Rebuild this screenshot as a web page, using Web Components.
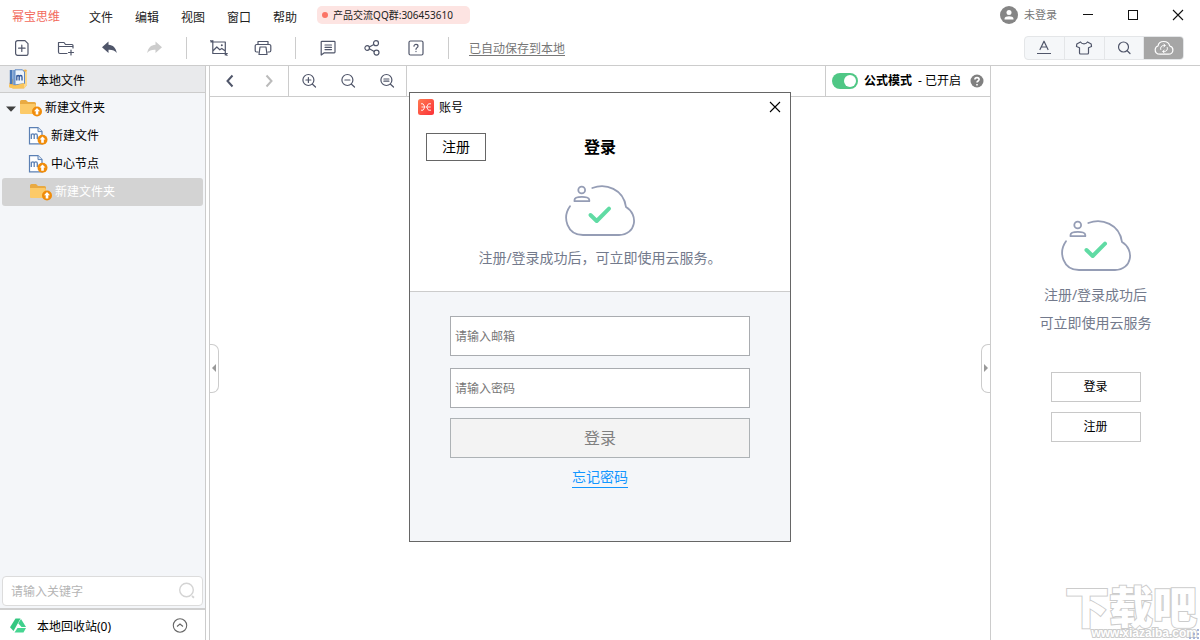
<!DOCTYPE html>
<html lang="zh-CN">
<head>
<meta charset="utf-8">
<title>幂宝思维</title>
<style>
  html, body { height: 100%; }
  body {
    margin: 0;
    background: #fff;
    color: #000;
    font: 12px/20px "Noto Sans", "Noto Sans CJK SC", sans-serif;
    overflow: hidden;
  }
</style>
</head>
<body>
<mind-app></mind-app>
<script>
const BASE = `
  *, *::before, *::after { box-sizing: border-box; }
  button { font: inherit; color: inherit; background: none; border: 0; padding: 0; margin: 0; cursor: pointer; }
  button, .row { display: flex; align-items: center; }
  button { justify-content: center; }
  input { font: inherit; color: inherit; margin: 0; min-width: 0; }
  a { color: inherit; }
`;

function define(name, css, html, setup) {
  const template = document.createElement('template');
  template.innerHTML = `<style>${BASE}${css}</style>${html}`;
  customElements.define(name, class extends HTMLElement {
    constructor() {
      super();
      this.attachShadow({ mode: 'open' }).append(template.content.cloneNode(true));
    }
    connectedCallback() { if (setup) setup.call(this, this.shadowRoot); }
  });
}

const line = 'fill="none" stroke="currentColor" stroke-width="1.2" stroke-linecap="round" stroke-linejoin="round"';
const badge = (x, y) => `<circle cx="${x}" cy="${y}" r="5" fill="#f08c0a"/><path d="M${x} ${y - 3.4}l3 3.200h-1.700v3.200h-2.600v-3.200h-1.700z" fill="#fff"/>`;
const magnifier = inner => [16, 16, `<g ${line}><circle cx="7.4" cy="7" r="5.5"/><path d="M11.5 11.2l3 2.8${inner}"/></g>`];

/* name: [width, height, markup] */
const ICONS = {
  'file-add': [16, 16, `<g ${line}><path d="M4 .7h7l3 3v10a1.6 1.6 0 0 1-1.6 1.6H3.6A2 2 0 0 1 1.6 13.300V2.700A2 2 0 0 1 3.600.7zM7.800 5v6.500M4.600 8.200h6.500"/></g>`],
  'folder-add': [18, 16, `<g ${line}><path d="M10 13.500H3A1.500 1.500 0 0 1 1.500 12V2.500H7l1.500 2H15A1 1 0 0 1 16 5.500V8M1.500 6.500H16M14 10v5M11.500 12.500h5"/></g>`],
  undo: [18, 16, `<path d="M7.500 1.500v3.300c4.500.2 7.400 3.100 8.300 8.200-2-2.600-4.600-3.500-8.300-3.300v3.300L1 7.200z" fill="currentColor"/>`],
  redo: [18, 16, `<path d="M10.500 1.500v3.300C6 5 3.100 7.900 2.200 13c2-2.600 4.600-3.500 8.300-3.300v3.300L17 7.200z" fill="currentColor"/>`],
  picture: [18, 16, `<g ${line}><path d="M.8 1.800h2M2.800.5v13h12.500M3 2h12.300v13M2.800 11l4-4 3 2.800 2-1.400 3.500 2.600M15.300 13.500h2M.8.500l1 1M16 14.500l1 .8"/></g><circle cx="11.800" cy="5.300" r="1" fill="currentColor"/>`],
  printer: [18, 16, `<g ${line}><path d="M4 4V1.500h10V4M4 12H2.700A1.500 1.500 0 0 1 1.200 10.500v-4.500A1.500 1.500 0 0 1 2.700 4.500h12.600a1.500 1.500 0 0 1 1.500 1.500v4.500a1.500 1.500 0 0 1-1.500 1.500H14M6 7h6l1 7.500H5z"/></g>`],
  note: [16, 16, `<g ${line}><path d="M2 1.300h12.200a.8.8 0 0 1 .8.8v10a.8.8 0 0 1-.8.800H4L1.200 15V2.100A.8.8 0 0 1 2 1.300zM5 5h6.500M5 7.300h6.500M5 9.600h6.500"/></g>`],
  share: [16, 16, `<g ${line}><circle cx="3.200" cy="8" r="2.300"/><circle cx="12" cy="3.200" r="2.500"/><circle cx="12.500" cy="12.600" r="2.500"/><path d="M5.300 7l4.500-2.500M5.400 8.800l4.800 2.700"/></g>`],
  help: [16, 16, `<g ${line}><rect x="1" y="1" width="14" height="14" rx="1.500"/><path d="M6 6.200C6 3.800 10 3.900 10 6.200 10 7.600 8 7.700 8 9.300M8 11.400v.2"/></g>`],
  'text-style': [16, 16, `<g ${line}><path d="M4 9.500L8 1.200l4 8.300M5.300 7h5.400"/><path d="M1 13.500h14" stroke-linecap="butt"/></g>`],
  shirt: [18, 16, `<g ${line}><path d="M5.500 2C7 4.500 11 4.500 12.500 2l3.700 2 .3 2.500-3 1.200v5.300a1 1 0 0 1-1 1h-7a1 1 0 0 1-1-1V7.700l-3-1.200L1.800 4z"/></g>`],
  search: [16, 16, `<g ${line}><circle cx="7.500" cy="7" r="5"/><path d="M11.200 10.800l2.800 2.700"/></g>`],
  'cloud-sync': [20, 16, `<g ${line}><path d="M6 14.200C2.500 14.200 1 12 1.200 9.500c.1-1.800 1.200-3 2.800-3.500C4.400 3.200 7 1.500 9.700 1.500c2.900 0 5.400 1.600 6 4.500 2 .5 3.200 2 3.200 3.900 0 2.600-1.800 4.300-4.400 4.300z"/><path d="M6.700 9.500C6 7.300 7.500 5.500 9.700 5.500h1.200M9.800 4l1.400 1.500L9.800 7M13.300 7.500c.7 2.200-.8 4-3 4H9.100M10.200 10l-1.400 1.500L10.200 13" stroke-width="1"/></g>`],
  left: [10, 14, `<path d="M7.500 1.500L2.500 7l5 5.500" fill="none" stroke="currentColor" stroke-width="2"/>`],
  right: [10, 14, `<path d="M2.500 1.500L7.500 7l-5 5.500" fill="none" stroke="currentColor" stroke-width="2"/>`],
  'zoom-in': magnifier('M4.900 7h5M7.400 4.500v5'),
  'zoom-out': magnifier('M4.900 7h5'),
  'zoom-fit': magnifier('M4.900 6h5M4.900 8.200h5'),
  minimize: [12, 12, `<path d="M1 5.500h10" stroke="currentColor"/>`],
  maximize: [12, 12, `<rect x="1.500" y="1.500" width="9" height="9" fill="none" stroke="currentColor"/>`],
  close: [12, 12, `<path d="M1 1l10 10M11 1L1 11" stroke="currentColor" stroke-width="1.100"/>`],
  avatar: [18, 18, `<circle cx="9" cy="9" r="9" fill="#858585"/><circle cx="9" cy="6.500" r="2.500" fill="#fff"/><path d="M4.500 13.500v-.8C4.500 10.900 7 10.200 9 10.200s4.500.7 4.500 2.500v.8z" fill="#fff"/>`],
  question: [14, 14, `<circle cx="7" cy="7" r="6.500" fill="#808080"/><path d="M4.900 5.600C4.900 2.900 9.100 3 9.100 5.500 9.100 7 7 7 7 8.600M7 10v1.400" fill="none" stroke="#fff" stroke-width="1.600"/>`],
  library: [20, 20, `<path d="M11 1.500l7-1 1 1V16l-3 3.500H5L1.500 18V14z" fill="#f0b24a"/><path d="M16 4l3-2.500V16l-3 3.500z" fill="#fbd78c"/><path d="M1.800 1h2.700v14H1.800z" fill="#4a78b8"/><path d="M4.800 1h2.200v15H4.800z" fill="#7fa3d4"/><path d="M7 .8h7.500L16.500 3v11.500L7 16z" fill="#eef4fb" stroke="#5f89c3"/><path d="M8.800 11.500V6.300M8.800 8C9.200 6 11.200 6 11.200 8v3.500M11.200 8c.4-2 2.800-2 2.800 0v3.500" fill="none" stroke="#31579b" stroke-width="1.300"/><path d="M1 15.500l5.500 1.200L16 14v5l-10.500.6L1 18.200z" fill="#f9c55c"/>`],
  folder: [22, 18, `<path d="M0 2.500A1.500 1.500 0 0 1 1.500 1H6l2 2h6.500A1.500 1.500 0 0 1 16 4.500v10H1.500A1.500 1.500 0 0 1 0 13z" fill="#e9aa42"/><path d="M0 5h14.500A1.500 1.500 0 0 1 16 6.500V15H1.500A1.500 1.500 0 0 1 0 13.500z" fill="#fcca68"/>${badge(17, 12.5)}`],
  document: [20, 18, `<path d="M1.500.6h8.500l4 4v12.200H1.500z" fill="#fff" stroke="#5b80b4" stroke-width="1.200"/><path d="M10 .6v4h4" fill="#dbe6f4" stroke="#5b80b4"/><path d="M3.300 12V6.800M3.300 8.500c.3-2.200 2.900-2.100 2.900 0V12M6.200 8.500c.3-2.200 3.100-2.100 3.100 0V12" fill="none" stroke="#5b80b4" stroke-width="1.300"/>${badge(14.5, 12.8)}`],
  caret: [10, 8, `<path d="M0 2.500h10L5 7.800z" fill="#404040"/>`],
  'find': [18, 18, `<circle cx="8.500" cy="8" r="6.800" fill="none" stroke="#d4d4d4" stroke-width="1.400"/><path d="M14 14l2 1.700" stroke="#d4d4d4" stroke-width="1.800"/>`],
  recycle: [17, 16, `<path d="M5.500 .5h5l-2.500 4.500-4.500 8L0 9.300z" fill="#35c781"/><path d="M11 1l5 8h-4.500L8.200 5.200z" fill="#3fd08c"/><path d="M7.500 10H16L13.500 14.500H4.500z" fill="#46d591"/>`],
  expand: [16, 16, `<g fill="none" stroke="#666" stroke-width="1.100"><circle cx="8" cy="7.500" r="6.700"/><path d="M5 8.500l3-2.500L11 8.500"/></g>`],
  'triangle-left': [6, 10, `<path d="M5 0v8L1 4z" fill="#999"/>`],
  'triangle-right': [6, 10, `<path d="M1 0v8l4-4z" fill="#999"/>`],
  brand: [16, 16, `<defs><linearGradient id="g" x1="0" y1="0" x2="1" y2="1"><stop stop-color="#ff7a50"/><stop offset="1" stop-color="#fb3038"/></linearGradient></defs><rect width="16" height="16" rx="2.500" fill="url(#g)"/><path d="M3 4.800h2L7 8l-2 3.200H3M3.500 8H7M13 4.800h-2.500L8.500 8l2 3.200H13M8.500 8h4.200" fill="none" stroke="#fff" stroke-width=".9"/>`],
  cloud: [70, 52, `<g fill="none" stroke="#959db5" stroke-width="1.800" stroke-linecap="round"><path d="M27.300 3C41-2 58.500 4 61 22 74 29.500 71 50 54 50H18C2 50-3 32.500 5 21.200"/><circle cx="16.700" cy="5" r="3.400"/><path d="M9.500 15C9.500 10.800 24.300 10.800 24.300 15V16.200H9.500z" stroke-linejoin="round"/></g><path d="M25.500 30l6.200 6L44 23.700" fill="none" stroke="#60dba4" stroke-width="4" stroke-linecap="round" stroke-linejoin="round"/>`],
  grip: [12, 12, `<path d="M9 1h2v2H9zM5 5h2v2H5zM9 5h2v2H9zM1 9h2v2H1zM5 9h2v2H5zM9 9h2v2H9z" fill="#a8b4d8"/>`],
};

define('ui-icon', `:host { display: inline-flex; flex: none; } svg { display: block; }`, `<span class="row"></span>`, function (root) {
  const [w, h, markup] = ICONS[this.getAttribute('name')];
  root.querySelector('span').innerHTML = `<svg width="${w}" height="${h}" viewBox="0 0 ${w} ${h}" aria-hidden="true">${markup}</svg>`;
});

define('menu-bar', `
  :host { display: flex; align-items: center; height: 32px; padding-left: 12px; color: #222; }
  .brand { color: #f2695c; padding-top: 2px; }
  nav { display: flex; gap: 22px; margin: 4px 20px 0 29px; }
  .group { height: 18px; width: 153px; padding-left: 5px; gap: 5px; border-radius: 5px; background: #fde4e2; font-size: 10px; line-height: 18px; margin-bottom: 2px; }
  .group::before { content: ""; width: 6px; height: 6px; border-radius: 50%; background: #fb7466; }
  .end { margin-left: auto; height: 30px; align-self: flex-start; }
  .user { gap: 6px; font-size: 11px; color: #777; margin-right: 8px; }
  .win { width: 45px; height: 30px; color: #111; }
`, `
  <span class="brand">幂宝思维</span>
  <nav><button>文件</button><button>编辑</button><button>视图</button><button>窗口</button><button>帮助</button></nav>
  <div class="row group">产品交流QQ群:306453610</div>
  <div class="row end">
    <button class="user"><ui-icon name="avatar"></ui-icon>未登录</button>
    <button class="win" aria-label="最小化"><ui-icon name="minimize"></ui-icon></button>
    <button class="win" aria-label="最大化"><ui-icon name="maximize"></ui-icon></button>
    <button class="win" aria-label="关闭"><ui-icon name="close"></ui-icon></button>
  </div>
`);

define('tool-bar', `
  :host { display: flex; align-items: center; height: 34px; padding: 0 16px 2px 0; box-sizing: border-box; border-bottom: 1px solid #ccc; color: #50566a; }
  button { width: 44px; height: 30px; }
  button:disabled { color: #ccc; }
  hr { width: 1px; height: 22px; margin: 0 10px; border: 0; background: #ccc; }
  a { color: #777; margin-left: 10px; padding-top: 2px; text-underline-offset: 2px; }
  .tabs { margin-left: auto; border: 1px solid #e4e6e8; border-radius: 4px; background: #f5f7f9; overflow: hidden; width: 160px; height: 24px; }
  .tabs button { flex: 1; height: 24px; border-left: 1px solid #e4e6e8; }
  .tabs button:first-child { border-left: 0; }
  .tabs .on { background: #a6a6a6; color: #fff; }
`, `
  <button aria-label="新建文件"><ui-icon name="file-add"></ui-icon></button>
  <button aria-label="新建文件夹"><ui-icon name="folder-add"></ui-icon></button>
  <button aria-label="撤销"><ui-icon name="undo"></ui-icon></button>
  <button aria-label="重做" disabled><ui-icon name="redo"></ui-icon></button>
  <hr>
  <button aria-label="导出图片"><ui-icon name="picture"></ui-icon></button>
  <button aria-label="打印"><ui-icon name="printer"></ui-icon></button>
  <hr>
  <button aria-label="备注"><ui-icon name="note"></ui-icon></button>
  <button aria-label="分享"><ui-icon name="share"></ui-icon></button>
  <button aria-label="帮助"><ui-icon name="help"></ui-icon></button>
  <hr>
  <a href="#saved">已自动保存到本地</a>
  <div class="row tabs">
    <button aria-label="文字"><ui-icon name="text-style"></ui-icon></button>
    <button aria-label="主题"><ui-icon name="shirt"></ui-icon></button>
    <button aria-label="搜索"><ui-icon name="search"></ui-icon></button>
    <button class="on" aria-label="云服务"><ui-icon name="cloud-sync"></ui-icon></button>
  </div>
`);

define('tree-row', `
  :host { display: flex; align-items: center; height: 28px; gap: 3px; padding-left: 26px; border-radius: 3px; }
  :host([open]) { padding-left: 4px; }
  :host([selected]) { background: #d3d3d3; color: #fff; padding-left: 28px; }
  .caret { display: none; margin-right: 1px; }
  :host([open]) .caret { display: inline-flex; }
  .kind { padding-top: 5px; }
`, `<ui-icon class="caret" name="caret"></ui-icon><span class="kind"></span><slot></slot>`, function (root) {
  root.querySelector('.kind').innerHTML = `<ui-icon name="${this.getAttribute('icon')}"></ui-icon>`;
});

define('file-sidebar', `
  :host { display: flex; flex-direction: column; width: 206px; box-sizing: border-box; flex: none; border-right: 1px solid #ccc; background: #f4f6f9; }
  h2 { font: inherit; height: 27px; margin: 0; padding: 0 8px; gap: 9px; background: #e9eaec; border-bottom: 1px solid #ccc; }
  h2 span { padding-top: 3px; }
  .tree { flex: 1; padding: 1px 2px; }
  .search { height: 30px; margin: 0 2px 2px; padding: 0 6px 0 8px; border: 1px solid #dcdcdc; border-radius: 4px; background: #fff; }
  input { flex: 1; border: 0; outline: 0; padding: 2px 0 0; background: none; }
  input::placeholder { color: #b5b5b5; }
  footer { height: 32px; border-top: 2px solid #d0d0d0; background: #fff; padding: 2px 17px 0 10px; gap: 10px; }
  footer span { padding-top: 2px; }
  footer button { margin-left: auto; }
`, `
  <h2 class="row"><ui-icon name="library"></ui-icon><span>本地文件</span></h2>
  <div class="tree">
    <tree-row icon="folder" open>新建文件夹</tree-row>
    <tree-row icon="document">新建文件</tree-row>
    <tree-row icon="document">中心节点</tree-row>
    <tree-row icon="folder" selected>新建文件夹</tree-row>
  </div>
  <div class="row search"><input type="text" placeholder="请输入关键字" aria-label="请输入关键字"><ui-icon name="find"></ui-icon></div>
  <footer class="row"><ui-icon name="recycle"></ui-icon><span>本地回收站(0)</span><button aria-label="展开"><ui-icon name="expand"></ui-icon></button></footer>
`);

define('canvas-pane', `
  :host { display: flex; flex-direction: column; flex: 1; min-width: 0; margin-left: 3px; border: solid #ccc; border-width: 0 1px; }
  .bar { height: 31px; border-bottom: 1px solid #ccc; }
  .set { height: 30px; border-right: 1px solid #ccc; color: #50566a; }
  .set button { width: 39px; height: 30px; }
  .set button:disabled { color: #bbb; }
  .mode { height: 30px; margin-left: auto; border-left: 1px solid #ccc; padding: 0 6px; }
  .mode input { appearance: none; width: 26px; height: 16px; border-radius: 8px; background: #4fc785; padding: 2px; display: flex; justify-content: flex-end; margin-right: 6px; }
  .mode input::before { content: ""; width: 12px; height: 12px; border-radius: 50%; background: #fff; }
  .mode button { margin-left: 9px; }
  label b { margin-right: 3px; }
  .canvas { flex: 1; position: relative; }
  .fold { position: absolute; top: 0; bottom: 0; margin: auto 0; width: 9px; height: 49px; border: 1px solid #ccc; background: #fff; }
  .fold.l { left: 0; border-left: 0; border-radius: 0 7px 7px 0; }
  .fold.r { right: 0; border-right: 0; border-radius: 7px 0 0 7px; }
`, `
  <div class="row bar">
    <div class="row set">
      <button aria-label="后退"><ui-icon name="left"></ui-icon></button>
      <button aria-label="前进" disabled><ui-icon name="right"></ui-icon></button>
    </div>
    <div class="row set">
      <button aria-label="放大"><ui-icon name="zoom-in"></ui-icon></button>
      <button aria-label="缩小"><ui-icon name="zoom-out"></ui-icon></button>
      <button aria-label="适应"><ui-icon name="zoom-fit"></ui-icon></button>
    </div>
    <div class="row mode">
      <input type="checkbox" id="formula" checked>
      <label for="formula"><b>公式模式</b> - 已开启</label>
      <button aria-label="帮助"><ui-icon name="question"></ui-icon></button>
    </div>
  </div>
  <div class="canvas">
    <button class="fold l" aria-label="收起左侧"><ui-icon name="triangle-left"></ui-icon></button>
    <button class="fold r" aria-label="收起右侧"><ui-icon name="triangle-right"></ui-icon></button>
  </div>
`);

define('account-panel', `
  :host { display: flex; flex-direction: column; align-items: center; width: 209px; flex: none; padding-top: 154px; }
  p { margin: 9px 0 35px; font-size: 14px; line-height: 28px; color: #737a8c; text-align: center; }
  .actions { display: grid; gap: 10px; }
  .actions button { width: 90px; height: 30px; border: 1px solid #c8c8c8; background: #fff; }
`, `
  <ui-icon name="cloud"></ui-icon>
  <p>注册/登录成功后<br>可立即使用云服务</p>
  <div class="actions"><button>登录</button><button>注册</button></div>
`);

define('login-dialog', `
  :host { display: flex; flex-direction: column; width: 382px; height: 450px; box-sizing: border-box; border: 1px solid #666; background: #fff; }
  header { height: 28px; padding: 0 9px 0 8px; gap: 5px; }
  header span { padding-top: 2px; }
  header button { margin-left: auto; }
  .intro { height: 171px; padding: 12px 16px 0; border-bottom: 1px solid #ccc; }
  .heading { display: grid; grid-template-columns: 60px 1fr 60px; }
  .heading button { height: 28px; border: 1px solid #666; font-size: 14px; }
  h1 { margin: 0; font-size: 16px; line-height: 28px; text-align: center; }
  .hero { display: flex; flex-direction: column; align-items: center; gap: 7px; padding-top: 24px; }
  p { margin: 0; font-size: 14px; line-height: 28px; color: #737a8c; }
  form { flex: 1; display: flex; flex-direction: column; align-items: center; padding: 24px 40px 0; background: #f4f6f9; }
  form input { width: 100%; height: 40px; padding: 1px 4px 0; border: 1px solid #a9acb0; background: #fff; border-radius: 0; margin-bottom: 12px; outline: 0; }
  input::placeholder { color: #777; }
  form input + button { margin-top: -2px; }
  form button { width: 100%; height: 40px; border: 1px solid #adb2b5; background: #f3f3f3; color: #808080; font-size: 16px; }
  a { margin-top: 9px; font-size: 14px; line-height: 20px; color: #1296ff; text-decoration: none; border-bottom: 1px solid; }
`, `
  <header class="row"><ui-icon name="brand"></ui-icon><span>账号</span><button aria-label="关闭"><ui-icon name="close"></ui-icon></button></header>
  <section class="intro">
    <div class="heading"><button>注册</button><h1>登录</h1></div>
    <div class="hero"><ui-icon name="cloud"></ui-icon><p>注册/登录成功后，可立即使用云服务。</p></div>
  </section>
  <form>
    <input type="email" placeholder="请输入邮箱" aria-label="请输入邮箱">
    <input type="password" placeholder="请输入密码" aria-label="请输入密码">
    <button type="button" disabled>登录</button>
    <a href="#forgot">忘记密码</a>
  </form>
`);

define('site-mark', `
  :host { display: flex; flex-direction: column; align-items: flex-end; padding-right: 3px; color: #fff; font-family: "Noto Sans CJK SC", sans-serif; pointer-events: none; }
  span { -webkit-text-stroke: 2px #ccc; paint-order: stroke fill; }
  .name { font-size: 44px; line-height: 44px; font-weight: 900; }
  .url { font: 700 12px/13px "Liberation Sans", sans-serif; }
`, `<span class="name">下载吧</span><span class="url">www.xiazaiba.com</span>`);

define('mind-app', `
  :host { display: flex; flex-direction: column; height: 100vh; position: relative; overflow: hidden; }
  main { flex: 1; display: flex; min-height: 0; }
  .overlay { position: absolute; inset: 0; display: flex; justify-content: center; align-items: flex-start; padding-top: 92px; }
  .grip, site-mark { position: absolute; right: 0; bottom: 0; }
`, `
  <menu-bar></menu-bar>
  <tool-bar></tool-bar>
  <main>
    <file-sidebar></file-sidebar>
    <canvas-pane></canvas-pane>
    <account-panel></account-panel>
  </main>
  <div class="overlay"><login-dialog role="dialog" aria-label="账号"></login-dialog></div>
  <site-mark></site-mark>
  <ui-icon class="grip" name="grip"></ui-icon>
`);
</script>
</body>
</html>
